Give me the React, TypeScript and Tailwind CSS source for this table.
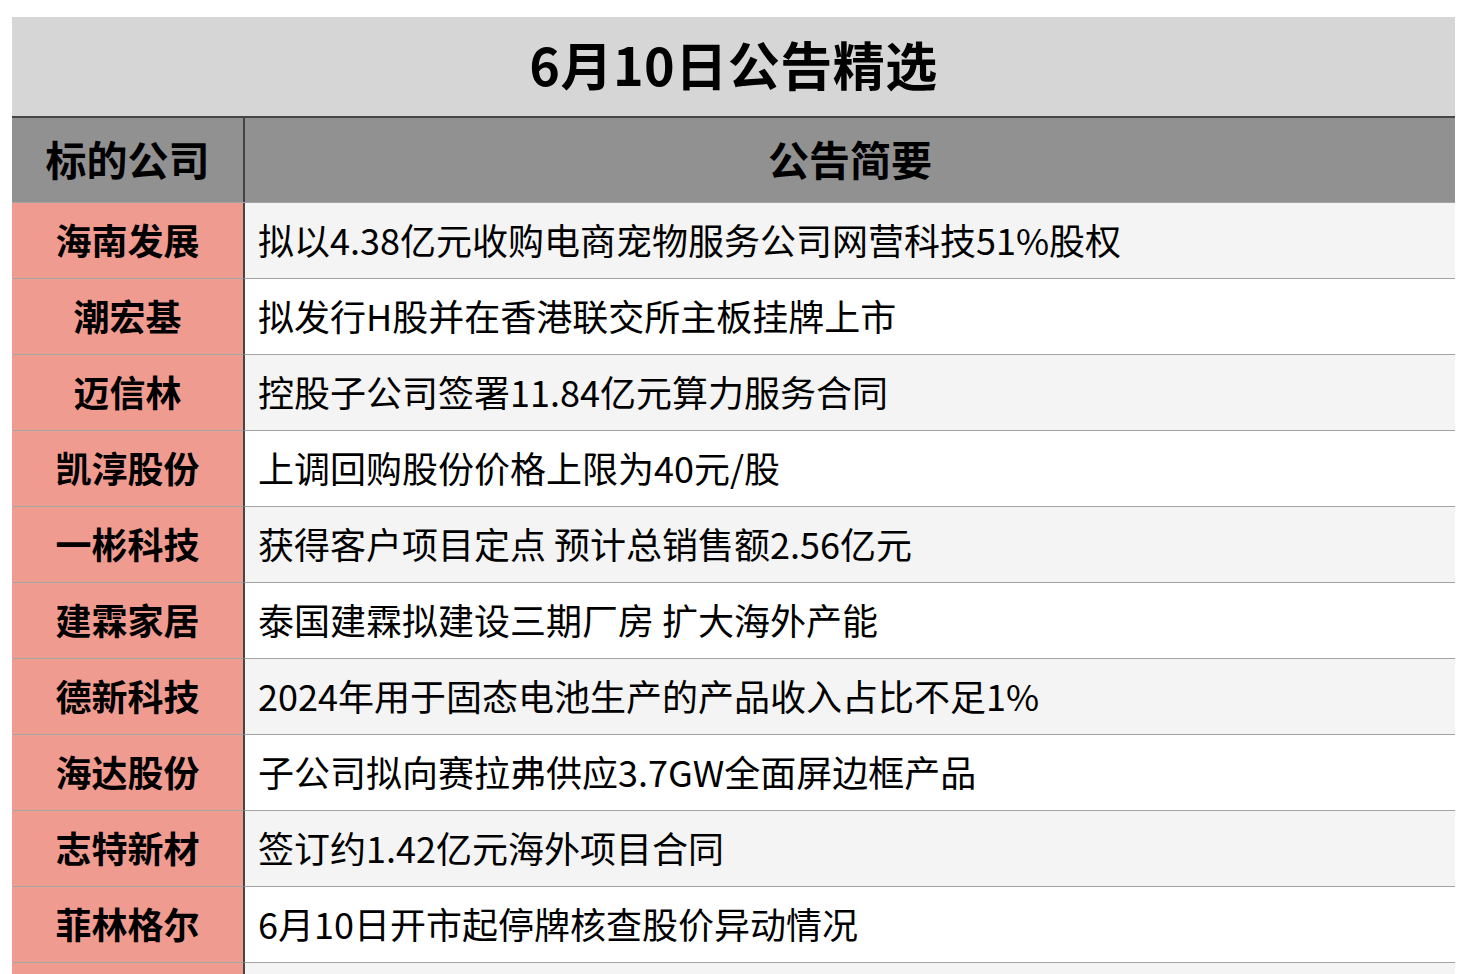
import React from "react";

type Row = {
  company: string;
  summary: string;
};

const rows: Row[] = [
  { company: "海南发展", summary: "拟以4.38亿元收购电商宠物服务公司网营科技51%股权" },
  { company: "潮宏基", summary: "拟发行H股并在香港联交所主板挂牌上市" },
  { company: "迈信林", summary: "控股子公司签署11.84亿元算力服务合同" },
  { company: "凯淳股份", summary: "上调回购股份价格上限为40元/股" },
  { company: "一彬科技", summary: "获得客户项目定点 预计总销售额2.56亿元" },
  { company: "建霖家居", summary: "泰国建霖拟建设三期厂房 扩大海外产能" },
  { company: "德新科技", summary: "2024年用于固态电池生产的产品收入占比不足1%" },
  { company: "海达股份", summary: "子公司拟向赛拉弗供应3.7GW全面屏边框产品" },
  { company: "志特新材", summary: "签订约1.42亿元海外项目合同" },
  { company: "菲林格尔", summary: "6月10日开市起停牌核查股价异动情况" },
  { company: "", summary: "" },
];

const font = {
  fontFamily: '"Noto Sans CJK SC", "Noto Sans", sans-serif',
};

const App = () => {
  return (
    <div className="h-[974px] w-full overflow-hidden bg-white pt-[17px] px-[12px] text-black" style={font}>
      <div className="w-[1443px]">
        <div className="flex h-[101px] items-center justify-center border-b-2 border-[#454545] bg-[#d6d6d6] pb-[5px]">
          <h1 className="text-[52px] font-bold leading-none tracking-[0.5px]">6月10日公告精选</h1>
        </div>
        <div className="grid h-[85px] grid-cols-[231px_1fr] border-b border-[#a3a3a3] bg-[#919191]">
          <div className="flex items-center justify-center pb-[3px] text-[41px] font-bold leading-none">标的公司</div>
          <div className="flex items-center justify-center border-l-2 border-[#454545] pb-[3px] text-[41px] font-bold leading-none">
            公告简要
          </div>
        </div>
        {rows.map((row, i) => (
          <div key={i} className="grid h-[76px] grid-cols-[231px_1fr]">
            <div className="flex items-center justify-center border-b border-[#a2aaa9] bg-[#f09b90] pb-[4px] text-[36px] font-bold leading-none">
              {row.company}
            </div>
            <div
              className={
                "flex items-center border-b border-l-2 border-b-[#a3a3a3] border-l-[#454545] pb-[4px] pl-[13px] text-[36px] leading-none " +
                (i % 2 === 0 ? "bg-[#f4f4f4]" : "bg-white")
              }
            >
              {row.summary}
            </div>
          </div>
        ))}
      </div>
    </div>
  );
};

export default App;
